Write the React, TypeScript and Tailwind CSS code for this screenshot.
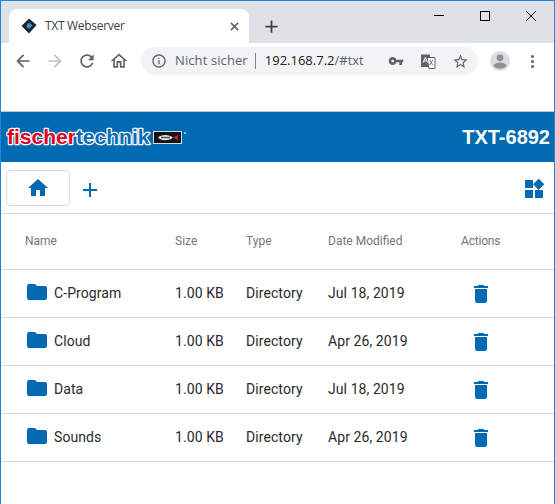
import React from 'react';

interface FileRow {
  name: string;
  date: string;
}

const files: FileRow[] = [
  { name: 'C-Program', date: 'Jul 18, 2019' },
  { name: 'Cloud', date: 'Apr 26, 2019' },
  { name: 'Data', date: 'Jul 18, 2019' },
  { name: 'Sounds', date: 'Apr 26, 2019' },
];

const columns = 'grid grid-cols-[150px_71px_82px_133px_1fr] pl-[24px] items-center';

function Icon({ d, className }: { d: string; className: string }) {
  return (
    <svg viewBox="0 0 24 24" fill="currentColor" className={className}>
      <path d={d} />
    </svg>
  );
}

const paths = {
  back: 'M20 11H7.83l5.59-5.59L12 4l-8 8 8 8 1.41-1.41L7.83 13H20v-2z',
  forward: 'M4 11h12.17l-5.59-5.59L12 4l8 8-8 8-1.41-1.41L16.17 13H4v-2z',
  reload: 'M17.65 6.35C16.2 4.9 14.21 4 12 4c-4.42 0-7.99 3.58-7.99 8s3.57 8 7.99 8c3.73 0 6.84-2.55 7.73-6h-2.08c-.82 2.33-3.04 4-5.65 4-3.31 0-6-2.69-6-6s2.69-6 6-6c1.66 0 3.14.69 4.22 1.78L13 11h7V4l-2.35 2.35z',
  homeOutline: 'M12 5.69l5 4.5V18h-2v-6H9v6H7v-7.81l5-4.5M12 3L2 12h3v8h6v-6h2v6h6v-8h3L12 3z',
  info: 'M11 7h2v2h-2zm0 4h2v6h-2zm1-9C6.48 2 2 6.48 2 12s4.48 10 10 10 10-4.48 10-10S17.52 2 12 2zm0 18c-4.41 0-8-3.59-8-8s3.59-8 8-8 8 3.59 8 8-3.59 8-8 8z',
  key: 'M12.65 10C11.83 7.67 9.61 6 7 6c-3.31 0-6 2.69-6 6s2.69 6 6 6c2.61 0 4.83-1.67 5.65-4H17v4h4v-4h2v-4H12.65zM7 14c-1.1 0-2-.9-2-2s.9-2 2-2 2 .9 2 2-.9 2-2 2z',
  star: 'M22 9.24l-7.19-.62L12 2 9.19 8.63 2 9.24l5.46 4.73L5.82 21 12 17.27 18.18 21l-1.63-7.03L22 9.24zM12 15.4l-3.76 2.27 1-4.28-3.32-2.88 4.38-.38L12 6.1l1.71 4.04 4.38.38-3.32 2.88 1 4.28L12 15.4z',
  home: 'M10 20v-6h4v6h5v-8h3L12 3 2 12h3v8z',
  add: 'M19 13h-6v6h-2v-6H5v-2h6V5h2v6h6v2z',
  widgets: 'M13 13v8h8v-8h-8zM3 21h8v-8H3v8zM3 3v8h8V3H3zm13.66-1.31L11 7.34 16.66 13l5.66-5.66-5.66-5.65z',
  folder: 'M10 4H4c-1.1 0-2 .9-2 2v12c0 1.1.9 2 2 2h16c1.1 0 2-.9 2-2V8c0-1.1-.9-2-2-2h-8l-2-2z',
  trash: 'M6 19c0 1.1.9 2 2 2h8c1.1 0 2-.9 2-2V7H6v12zM19 4h-3.5l-1-1h-5l-1 1H5v2h14V4z',
};

function BrowserChrome() {
  return (
    <div className="font-['Open_Sans',sans-serif]">
      {/* Tab strip */}
      <div className="flex h-[42px] bg-[#dee1e6]">
        <div className="ml-[8px] mt-[8px] flex h-[34px] w-[240px] items-center rounded-t-lg bg-white pl-[12px] pr-[10px]">
          <svg viewBox="0 0 16 16" className="h-[16px] w-[16px] shrink-0">
            <path d="M8 0.5 15.5 7 8 15.5 0.5 8z" fill="#1d2327" />
            <path d="M8 4.5 11.5 7.5 8 11 5 8z" fill="#3d8fd6" />
          </svg>
          <span className="ml-[8px] flex-1 text-[12px] tracking-[-0.3px] text-[#3c4043]">TXT Webserver</span>
          <svg viewBox="0 0 10 10" className="h-[9px] w-[9px] text-[#5f6368]" stroke="currentColor" strokeWidth="1.7">
            <path d="M1 1 9 9M9 1 1 9" />
          </svg>
        </div>
        <div className="ml-[10px] mt-[13px] flex h-[24px] w-[24px] items-center justify-center">
          <Icon d={paths.add} className="h-[21px] w-[21px] text-[#3c4043]" />
        </div>
        <div className="ml-auto flex h-[29px] items-start">
          <div className="flex h-[29px] w-[46px] items-center justify-center">
            <div className="h-px w-[10px] bg-black" />
          </div>
          <div className="flex h-[29px] w-[46px] items-center justify-center">
            <div className="h-[10px] w-[10px] border border-black" />
          </div>
          <div className="flex h-[29px] w-[46px] items-center justify-center">
            <svg viewBox="0 0 10 10" className="h-[10px] w-[10px]" stroke="black" strokeWidth="0.9">
              <path d="M0 0 10 10M10 0 0 10" />
            </svg>
          </div>
        </div>
      </div>

      {/* Toolbar */}
      <div className="flex h-[36px] items-center bg-white pl-[12px] text-[#5f6368]">
        <Icon d={paths.back} className="h-[20px] w-[20px]" />
        <Icon d={paths.forward} className="ml-[12px] h-[20px] w-[20px] text-[#bdc1c6]" />
        <Icon d={paths.reload} className="ml-[12px] h-[20px] w-[20px]" />
        <Icon d={paths.homeOutline} className="ml-[12px] h-[20px] w-[20px]" />
        <div className="ml-[12px] flex h-[28px] w-[337px] items-center rounded-full bg-[#f1f3f4] pl-[10px]">
          <Icon d={paths.info} className="h-[16px] w-[16px] shrink-0" />
          <span className="ml-[8px] whitespace-nowrap text-[13px] tracking-[0.1px] text-[#5f6368]">Nicht sicher</span>
          <div className="ml-[7px] h-[16px] w-px bg-[#80868b]" />
          <span className="ml-[9px] whitespace-nowrap text-[13px] text-[#202124]">
            192.168.7.2<span className="text-[#5f6368]">/#txt</span>
          </span>
          <Icon d={paths.key} className="ml-auto h-[16px] w-[16px] shrink-0" />
          <svg viewBox="0 0 16 16" className="ml-[16px] h-[16px] w-[16px] shrink-0">
            <path d="M1 1.5h9v12.5H1z" fill="#5f6368" />
            <path d="M7 4.5h8v11H9z" fill="#fff" stroke="#5f6368" />
            <path d="M9.5 7l3.5 5M13 7l-3.5 5" stroke="#5f6368" strokeWidth="0.9" />
            <path d="M3 9.5 5.3 4.5 7.5 9.5M3.8 8h2.8" stroke="#fff" fill="none" strokeWidth="1" />
          </svg>
          <Icon d={paths.star} className="ml-[16px] mr-[9px] h-[17px] w-[17px] shrink-0" />
        </div>
        <div className="ml-[12px] flex h-[20px] w-[20px] items-center justify-center overflow-hidden rounded-full bg-[#dadce0]">
          <svg viewBox="0 0 20 20" className="h-[20px] w-[20px] text-[#8d9196]" fill="currentColor">
            <circle cx="10" cy="6.8" r="3.4" />
            <path d="M3.5 15.2C3.5 12.6 7.5 11.4 10 11.4s6.500 1.200 6.500 3.800c-1.500 1.700-3.800 2.300-6.500 2.300s-5-.6-6.500-2.300z" />
          </svg>
        </div>
        <div className="ml-[21px] flex flex-col gap-[2px]">
          <div className="h-[3px] w-[3px] rounded-full bg-[#5f6368]" />
          <div className="h-[3px] w-[3px] rounded-full bg-[#5f6368]" />
          <div className="h-[3px] w-[3px] rounded-full bg-[#5f6368]" />
        </div>
      </div>
      <div className="h-[32px] bg-white" />
    </div>
  );
}

function Logo() {
  return (
    <svg viewBox="0 0 182 26" className="h-[26px] w-[182px]">
      <text
        x="1"
        y="19.500"
        fontFamily="'Liberation Sans', sans-serif"
        fontSize="21"
        fontWeight="bold"
        stroke="#ffffff"
        strokeWidth="2.500"
        strokeLinejoin="round"
        paintOrder="stroke"
      >
        <tspan fill="#e2001a">fischer</tspan>
        <tspan fill="#0a6cb4">technik</tspan>
      </text>
      <rect x="147" y="7" width="29" height="13" fill="#d9dde0" />
      <rect x="148" y="8" width="27" height="11" fill="#141414" />
      <path d="M152 13.500C155 10 163 10 167 13.500 163 17 155 17 152 13.500z" fill="#e8e8e8" />
      <path d="M167 13.500 172 11V16z" fill="#c8202c" />
      <path d="M155 13.500h9" stroke="#555" strokeWidth="1.500" />
      <circle cx="179" cy="9" r="1" fill="#c9d6e2" />
    </svg>
  );
}

export default function App() {
  return (
    <div className="h-[504px] w-[555px] overflow-hidden border-x border-t border-[#1a86d9] bg-white font-['Roboto',sans-serif]">
      <BrowserChrome />

      {/* Header */}
      <div className="h-px bg-[#c4c7c9]" />
      <div className="flex h-[50px] items-center justify-between bg-[#006ab3] pl-[5px] pr-[4px]">
        <Logo />
        <span className="font-['Liberation_Sans',sans-serif] text-[20px] font-bold text-white">TXT-6892</span>
      </div>

      {/* Tabs */}
      <div className="flex h-[52px] items-start border-b border-[#dcdcdc] pl-[5px] pr-[8px] pt-[8px]">
        <div className="flex h-[36px] w-[64px] items-center justify-center rounded border border-[#dddddd]">
          <Icon d={paths.home} className="h-[24px] w-[24px] text-[#006ab3]" />
        </div>
        <Icon d={paths.add} className="ml-[8px] mt-[8px] h-[24px] w-[24px] text-[#006ab3]" />
        <Icon d={paths.widgets} className="ml-auto mt-[7px] h-[24px] w-[24px] text-[#006ab3]" />
      </div>

      {/* Table */}
      <div className={`${columns} h-[56px] border-b border-[#dcdcdc] pb-[2px] text-[12px] text-[#757575]`}>
        <span>Name</span>
        <span>Size</span>
        <span>Type</span>
        <span>Date Modified</span>
        <span className="tracking-[-0.2px]">Actions</span>
      </div>
      {files.map((file) => (
        <div key={file.name} className={`${columns} h-[48px] border-b border-[#dcdcdc] text-[14px] tracking-[0.08px] text-[#2a2a2a]`}>
          <div className="flex items-center">
            <Icon d={paths.folder} className="h-[24px] w-[24px] -translate-y-[2px] text-[#006ab3]" />
            <span className="ml-[5px]">{file.name}</span>
          </div>
          <span>1.00 KB</span>
          <span>Directory</span>
          <span>{file.date}</span>
          <div className="pl-[8px]">
            <Icon d={paths.trash} className="h-[24px] w-[24px] text-[#006ab3]" />
          </div>
        </div>
      ))}
    </div>
  );
}
